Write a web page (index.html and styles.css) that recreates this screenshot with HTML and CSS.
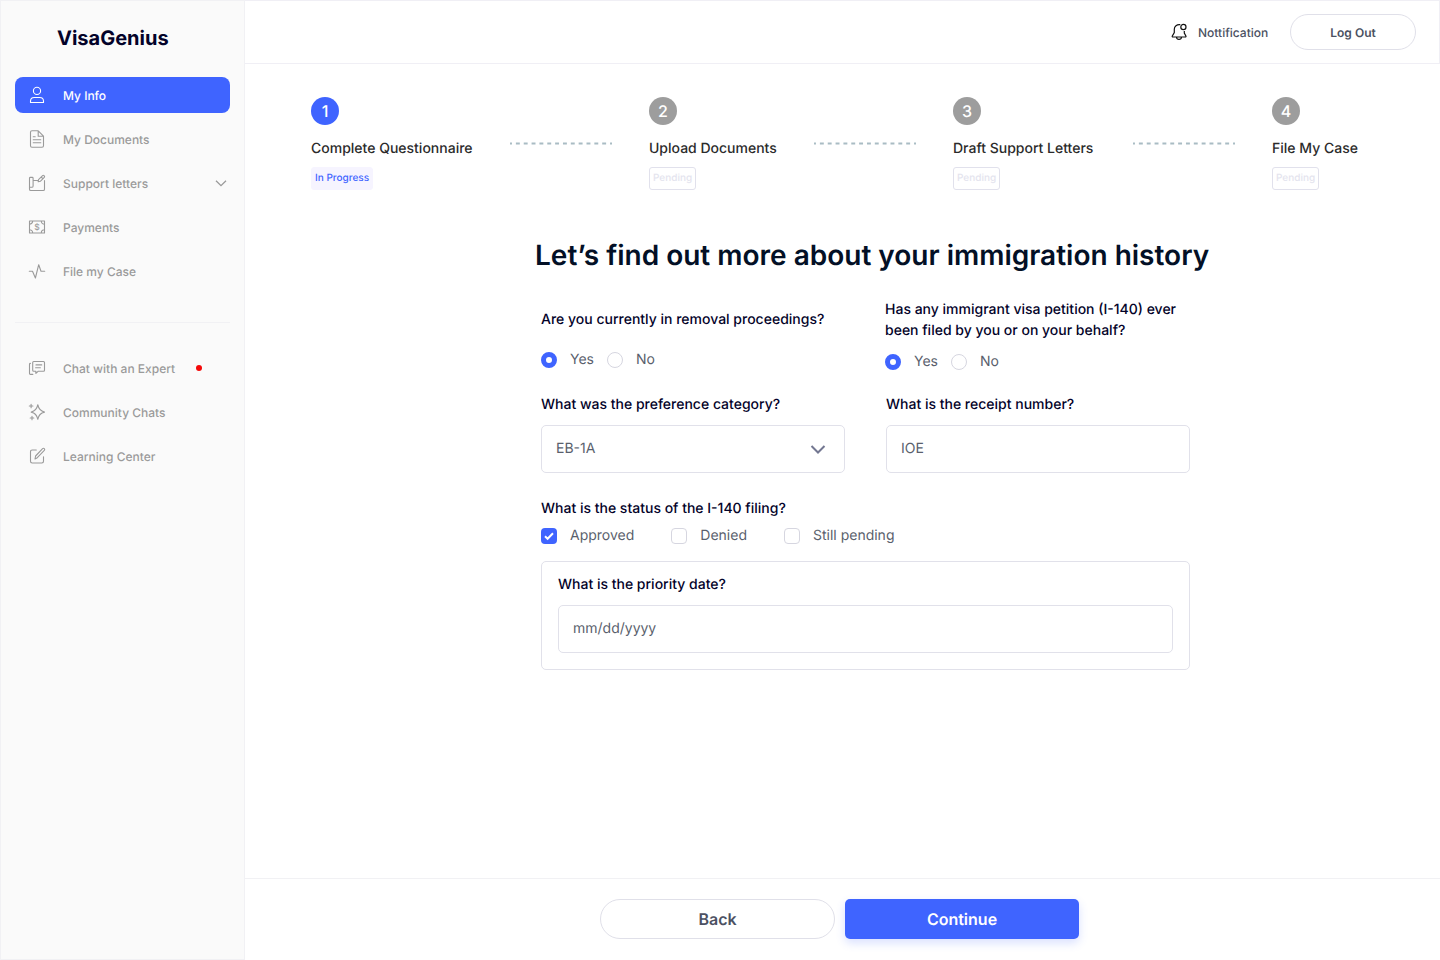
FILE: index.html
```html
<!DOCTYPE html>
<html lang="en">
<head>
<meta charset="utf-8">
<title>VisaGenius</title>
<link rel="stylesheet" href="styles.css">
</head>
<body>
<div class="app">
  <aside class="sidebar">
    <div class="brand">VisaGenius</div>
    <nav class="nav">
      <a class="nav-item active"><svg class="icon" viewBox="0 0 20 20"><circle cx="10" cy="5.9" r="3.6"/><path d="M3.5 17.5v-1.3c0-2.2 1.6-3.7 3.8-3.7h5.4c2.2 0 3.8 1.5 3.8 3.7v1.3z"/></svg><span>My Info</span></a>
      <a class="nav-item"><svg class="icon" viewBox="0 0 20 20"><path d="M11.2 1.8H5c-.9 0-1.5.6-1.5 1.5v13.4c0 .9.6 1.5 1.5 1.5h10c.9 0 1.5-.6 1.5-1.5V7.2zM11.2 1.8v5.4h5.3M6.2 7.7h2M6.2 10.7h7.6M6.2 13.8h7.6"/></svg><span>My Documents</span></a>
      <a class="nav-item"><svg class="icon" viewBox="0 0 20 20"><path d="M2.5 14.3V5.2c0-.5.3-.8.8-.8h2c.5 0 .8.3.8.8v7.7c0 .8-.6 1.4-1.4 1.4H2.5v1.9c0 .8.5 1.3 1.3 1.3h12.4c.8 0 1.3-.5 1.3-1.3V7.5M6.1 7.5h4.6M11.2 8.8l.3-2.2 4.1-4c.4-.4.9-.4 1.3 0l.4.4c.4.4.4.9 0 1.3l-4 4zM14.2 4l1.6 1.7"/></svg><span>Support letters</span><svg class="chevron" viewBox="0 0 12 12"><path d="M1 3.700l5 5 5-5"/></svg></a>
      <a class="nav-item"><svg class="icon" viewBox="0 0 20 20"><path d="M2.5 4h15v12h-15zM2.5 7.2a3.2 3.2 0 0 0 3.2-3.2M14.3 4a3.2 3.2 0 0 0 3.2 3.2M2.5 12.8A3.2 3.2 0 0 1 5.7 16M14.3 16a3.2 3.2 0 0 1 3.2-3.2"/><text class="coin" x="10" y="12.9">$</text></svg><span>Payments</span></a>
      <a class="nav-item"><svg class="icon" viewBox="0 0 20 20"><path d="M2.300 10.300h3.200L8.400 17l3.300-13.300 2.300 6.600h3.700"/></svg><span>File my Case</span></a>
    </nav>
    <nav class="nav secondary">
      <a class="nav-item"><svg class="icon" viewBox="0 0 20 20"><path d="M6.7 3.5h9.8c.6 0 1 .4 1 1v7.7c0 .6-.4 1-1 1h-5.2l-2.4 2.2v-2.2H6.7c-.6 0-1-.4-1-1V4.5c0-.6.4-1 1-1zM9 6.9h5.7M8.6 9.7h4.8M3.4 5.4c-.6 0-.9.4-.9.9v9.2c0 .6.4.9.9.9h2.4"/></svg><span>Chat with an Expert</span><i class="unread"></i></a>
      <a class="nav-item"><svg class="icon" viewBox="0 0 20 20"><path d="M10.8 2.7c.8 4.2 2.5 6.4 6.7 7.4-4.2.9-5.9 3-6.7 7.2-.8-4.2-2.5-6.3-6.6-7.2 4.1-1 5.8-3.2 6.6-7.4zM4.1 2.2v3.6M2.3 4h3.6M5 14.2v3.6M3.2 16h3.6"/></svg><span>Community Chats</span></a>
      <a class="nav-item"><svg class="icon" viewBox="0 0 20 20"><path d="M9.3 4H5.2C4.200 4 3.500 4.700 3.500 5.700v9.600C3.500 16.300 4.200 17 5.200 17h9.600c1 0 1.700-.7 1.700-1.700v-4.600M8 13l.6-3 7-7.300c.5-.5 1.200-.5 1.700 0s.5 1.200 0 1.700l-7 7.300z"/></svg><span>Learning Center</span></a>
    </nav>
  </aside>

  <div class="page">
    <header class="topbar">
      <svg class="bell" viewBox="0 0 20 20"><path d="M11.300 2.700C7.800 2.200 5.300 4.400 5.300 7.300v3.200L3.300 14c-.3.600 0 1 .6 1h12.400c.6 0 .9-.4.6-1l-1.600-3V9M7.500 15.200c.3 3 4.700 3 5 0"/><circle cx="14.400" cy="5" r="2.600"/></svg>
      <span class="notif">Nottification</span>
      <button class="logout">Log Out</button>
    </header>

    <main class="content">
      <section class="stepper">
        <div class="step current"><b class="num">1</b><span class="step-name">Complete Questionnaire</span><span class="tag">In Progress</span></div>
        <svg class="dots" viewBox="0 0 103 3"><path d="M0 1.500h102"/></svg>
        <div class="step"><b class="num">2</b><span class="step-name">Upload Documents</span><span class="tag">Pending</span></div>
        <svg class="dots" viewBox="0 0 103 3"><path d="M0 1.500h102"/></svg>
        <div class="step"><b class="num">3</b><span class="step-name">Draft Support Letters</span><span class="tag">Pending</span></div>
        <svg class="dots" viewBox="0 0 103 3"><path d="M0 1.500h102"/></svg>
        <div class="step"><b class="num">4</b><span class="step-name">File My Case</span><span class="tag">Pending</span></div>
      </section>

      <h1 class="title">Let’s find out more about your immigration history</h1>

      <form class="form">
        <div class="row questions">
          <div class="col removal">
            <p class="label">Are you currently in removal proceedings?</p>
            <div class="options"><i class="radio on"></i><span>Yes</span><i class="radio"></i><span>No</span></div>
          </div>
          <div class="col petition">
            <p class="label">Has any immigrant visa petition (I-140) ever<br>been filed by you or on your behalf?</p>
            <div class="options"><i class="radio on"></i><span>Yes</span><i class="radio"></i><span>No</span></div>
          </div>
        </div>
        <div class="row fields">
          <div class="col">
            <p class="label">What was the preference category?</p>
            <div class="input"><span>EB-1A</span><svg class="caret" viewBox="0 0 16 10"><path d="M1.500 2L8 8.500 14.500 2"/></svg></div>
          </div>
          <div class="col">
            <p class="label">What is the receipt number?</p>
            <div class="input"><span>IOE</span></div>
          </div>
        </div>
        <p class="label">What is the status of the I-140 filing?</p>
        <div class="checks">
          <div class="check"><i class="box on"><svg viewBox="0 0 16 16"><path d="M4 8.300l2.600 2.500L12 5.300"/></svg></i><span>Approved</span></div>
          <div class="check"><i class="box"></i><span>Denied</span></div>
          <div class="check"><i class="box"></i><span>Still pending</span></div>
        </div>
        <div class="panel">
          <p class="label">What is the priority date?</p>
          <div class="input"><span>mm/dd/yyyy</span></div>
        </div>
      </form>
    </main>

    <footer class="actions">
      <button class="btn back">Back</button>
      <button class="btn next">Continue</button>
    </footer>
  </div>
</div>
</body>
</html>
```
FILE: styles.css
```css
* { box-sizing: border-box; margin: 0; padding: 0; }
body { font-family: Inter, "Liberation Sans", sans-serif; background: #fff; color: #030229; text-rendering: geometricPrecision; }
svg { fill: none; stroke: currentColor; flex: none; }
button { font-family: inherit; background: #fff; text-rendering: inherit; }
.app { display: flex; width: 1440px; height: 960px; white-space: nowrap; overflow: hidden; }

.sidebar { width: 245px; flex: none; background: #fafafa; border: 1px solid #f1f1f4; padding: 24px 14px 23px; }
.brand { font-size: 20px; line-height: 26px; font-weight: 700; padding-left: 42px; }
.nav { display: flex; flex-direction: column; gap: 8px; padding-top: 26px; width: 215px; }
.secondary { margin-top: 33px; border-top: 1px solid #f1f1f4; padding-top: 27px; }
.nav-item { display: flex; align-items: center; height: 36px; padding-left: 12px; font-size: 12px; font-weight: 500; color: #9a9a9a; border-radius: 8px; }
.nav-item span { margin-left: 16px; }
.active { background: #3f64ff; color: #fff; }
.icon { width: 20px; height: 20px; stroke-width: 1.100; stroke-linecap: round; stroke-linejoin: round; }
.coin { font-size: 8.500px; font-weight: 500; fill: currentColor; stroke: none; text-anchor: middle; }
.chevron { width: 12px; height: 12px; margin-left: auto; margin-right: 3px; stroke-width: 1.300; }
.unread { width: 6px; height: 6px; border-radius: 50%; background: #f40808; margin-left: 21px; }

.page { flex: 1; display: flex; flex-direction: column; }
.topbar { height: 64px; flex: none; display: flex; align-items: center; justify-content: flex-end; border: 1px solid #f0eff5; border-left: 0; padding-right: 23px; }
.bell { width: 20px; height: 20px; color: #111; stroke-width: 1.200; }
.notif { margin-left: 9px; width: 71px; font-size: 12px; font-weight: 500; color: #4b5162; }
.logout { width: 126px; height: 36px; margin-left: 21px; border: 1px solid #e0e0e9; border-radius: 18px; font-size: 12px; font-weight: 600; color: #4b5162; }

.content { flex: 1; }
.stepper { display: flex; gap: 36px; padding: 33px 0 0 66px; }
.step { display: flex; flex-direction: column; align-items: flex-start; width: 163px; }
.step:nth-child(3) { width: 129px; }
.step:nth-child(5) { width: 144px; }
.num { width: 28px; height: 28px; border-radius: 50%; background: #9d9d9d; color: #fff; font-size: 16px; line-height: 28px; font-weight: 500; text-align: center; }
.step-name { font-size: 14px; line-height: 20px; font-weight: 500; color: #2b2b2b; margin-top: 14px; }
.tag { margin-top: 8px; height: 23px; border: 1px solid #e1e1ec; border-radius: 3px; padding: 0 3px; font-size: 10px; line-height: 21px; font-weight: 500; color: #e4e4ee; }
.current .num { background: #3f64ff; }
.current .tag { background: #f6f4ff; border-color: #f6f4ff; color: #3f64ff; }
.dots { width: 103px; height: 3px; margin-top: 45px; color: #a9bcc4; stroke-width: 2; stroke-dasharray: 3.923; stroke-dashoffset: 1.960; }

.title { width: 660px; margin: 45px 0 0 290px; font-size: 28px; line-height: 40px; font-weight: 600; color: #031026; }
.form { width: 649px; margin: 24px 0 0 296px; }
.row { display: flex; }
.col { width: 304px; }
.questions { gap: 40px; height: 95px; }
.fields { gap: 41px; }
.removal { padding-top: 10px; }
.label { font-size: 14px; line-height: 21px; font-weight: 500; }
.options { display: flex; align-items: center; height: 20px; color: #5a5f6d; font-size: 14px; }
.removal .options { margin-top: 20px; }
.petition .options { margin-top: 11px; }
.options span { margin: -2px 13px 0; }
.radio { width: 16px; height: 16px; border-radius: 50%; border: 1px solid #d6d6e0; }
.radio.on { border: 5px solid #3f64ff; }
.input { display: flex; align-items: center; justify-content: space-between; height: 48px; margin-top: 10px; padding: 0 18px 1px 14px; border: 1px solid #e1e1ea; border-radius: 5px; font-size: 14px; color: #5a5f6d; }
.caret { width: 16px; height: 10px; margin-top: 1px; color: #737791; stroke-width: 2; }
.fields + .label { margin-top: 25px; }
.checks { display: flex; gap: 37px; height: 20px; margin-top: 7px; font-size: 14px; color: #5a5f6d; }
.check { display: flex; align-items: center; gap: 13px; }
.check span { margin-top: -2px; }
.box { display: block; width: 16px; height: 16px; border: 1px solid #d6d6e0; border-radius: 4px; }
.box.on { border: 0; background: #3f64ff; color: #fff; }
.box svg { display: block; width: 16px; height: 16px; stroke-width: 2; }
.panel { height: 109px; margin-top: 15px; padding: 12px 16px; border: 1px solid #e1e1ea; border-radius: 5px; }

.actions { height: 82px; flex: none; display: flex; gap: 10px; padding: 20px 0 0 355px; border-top: 1px solid #f1f1f4; }
.btn { height: 40px; font-size: 16px; font-weight: 600; }
.back { width: 235px; border: 1px solid #e0e0e9; border-radius: 20px; color: #4b5162; }
.next { width: 234px; border: 0; border-radius: 5px; background: #3f64ff; color: #fff; box-shadow: 0 4px 10px rgba(63, 100, 255, 0.2); }
```
